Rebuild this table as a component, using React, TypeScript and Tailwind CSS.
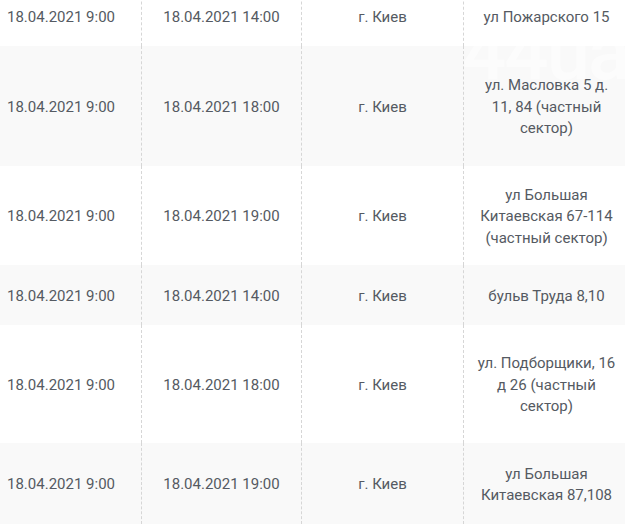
const rows: { start: string; end: string; city: string; address: string[]; h: string; gray: boolean }[] = [
  { start: '18.04.2021 9:00', end: '18.04.2021 14:00', city: 'г. Киев', address: ['ул Пожарского 15'], h: 'h-[60px] -mt-[14px]', gray: false },
  { start: '18.04.2021 9:00', end: '18.04.2021 18:00', city: 'г. Киев', address: ['ул. Масловка 5 д.', '11, 84 (частный', 'сектор)'], h: 'h-[120px]', gray: true },
  { start: '18.04.2021 9:00', end: '18.04.2021 19:00', city: 'г. Киев', address: ['ул Большая', 'Китаевская 67-114', '(частный сектор)'], h: 'h-[99px]', gray: false },
  { start: '18.04.2021 9:00', end: '18.04.2021 14:00', city: 'г. Киев', address: ['бульв Труда 8,10'], h: 'h-[60px]', gray: true },
  { start: '18.04.2021 9:00', end: '18.04.2021 18:00', city: 'г. Киев', address: ['ул. Подборщики, 16', 'д 26 (частный', 'сектор)'], h: 'h-[118px]', gray: false },
  { start: '18.04.2021 9:00', end: '18.04.2021 19:00', city: 'г. Киев', address: ['ул Большая', 'Китаевская 87,108'], h: 'h-[81px]', gray: true },
]

export default function App() {
  return (
    <div className="relative h-[524px] w-[625px] overflow-hidden bg-white font-['Roboto',sans-serif] text-[15px] leading-[21.5px] text-[#555a62]">
      {rows.map((row, i) => (
        <div
          key={i}
          className={`grid grid-cols-[141px_160px_162px_162px] ${row.h} ${row.gray ? 'bg-[#f9f9f9]' : 'bg-white'}`}
        >
          <div className="flex items-center pl-[7px] pt-[3px] whitespace-nowrap">{row.start}</div>
          <div className="flex items-center justify-center border-l border-dashed border-[#d6d6d6] pt-[3px] whitespace-nowrap">
            {row.end}
          </div>
          <div className="flex items-center justify-center border-l border-dashed border-[#d6d6d6] pt-[3px] whitespace-nowrap">
            {row.city}
          </div>
          <div className="flex flex-col items-center justify-center border-l border-dashed border-[#d6d6d6] pl-[4px] pt-[3px] text-center">
            {row.address.map((line) => (
              <span key={line} className="whitespace-nowrap">
                {line}
              </span>
            ))}
          </div>
        </div>
      ))}
      {/* faint site watermark */}
      <div
        aria-hidden
        className="pointer-events-none absolute left-[462px] top-[14px] select-none font-['Roboto',sans-serif] text-[78px] font-medium leading-none tracking-[-2px] text-white/50"
      >
        44ua
      </div>
    </div>
  )
}
